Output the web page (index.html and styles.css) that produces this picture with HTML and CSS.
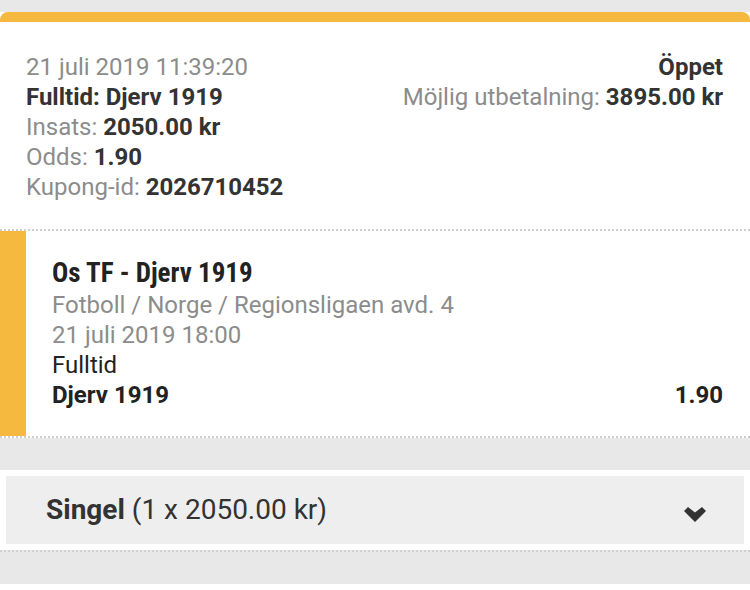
FILE: index.html
```html
<!DOCTYPE html>
<html lang="sv">
<head>
    <meta charset="UTF-8">
    <meta name="viewport" content="width=device-width, initial-scale=1.0">
    <title>Kupong</title>
    <link rel="stylesheet" href="styles.css">
</head>
<body>
    <div class="top-gap"></div>

    <div class="summary">
        <div class="summary-left">
            <div class="muted">21 juli 2019 11:39:20</div>
            <div class="strong">Fulltid: Djerv 1919</div>
            <div class="muted">Insats: <b class="strong">2050.00 kr</b></div>
            <div class="muted">Odds: <b class="strong">1.90</b></div>
            <div class="muted">Kupong-id: <b class="strong">2026710452</b></div>
        </div>
        <div class="summary-right">
            <div class="strong">Öppet</div>
            <div class="muted">Möjlig utbetalning: <b class="strong">3895.00 kr</b></div>
        </div>
    </div>

    <div class="selection">
        <div class="leg">
            <div class="leg-title">Os TF - Djerv 1919</div>
            <div class="muted">Fotboll / Norge / Regionsligaen avd. 4</div>
            <div class="muted">21 juli 2019 18:00</div>
            <div class="dark">Fulltid</div>
            <div class="leg-pick">
                <span>Djerv 1919</span>
                <span>1.90</span>
            </div>
        </div>
    </div>

    <div class="band"></div>

    <div class="stake-wrap">
        <div class="stake">
            <span><b>Singel</b> (1 x 2050.00 kr)</span>
            <svg class="chevron" width="22" height="15" viewBox="0 0 22 15">
                <path d="M0 4 L4 0 L11 5.5 L18 0 L22 4 L11 15 Z" fill="#333"/>
            </svg>
        </div>
    </div>

    <div class="band dotted"></div>
</body>
</html>
```

FILE: styles.css
```css
body { margin: 0; background: #fff; font-family: Roboto, "Liberation Sans", sans-serif; font-size: 24px; line-height: 30px; color: #333; }
b { font-weight: 700; }
.top-gap { height: 12px; background: #e8e8e8; }
.summary { display: flex; justify-content: space-between; background: #fff; border-top: 10px solid #f5b940; border-radius: 8px 8px 0 0; padding: 30px 27px 27px 26px; }
.summary-right { text-align: right; }
.muted { color: #8c8c8c; }
.strong { color: #333; font-weight: 700; }
.dark { color: #222; }
.selection { border-top: 2px dotted #cfcfcf; border-bottom: 2px dotted #cfcfcf; }
.leg { border-left: 26px solid #f5b940; padding: 25px 27px 26px 26px; }
.leg-title { font-size: 27px; line-height: 34px; font-weight: 700; font-stretch: condensed; color: #222; }
.leg-pick { display: flex; justify-content: space-between; font-weight: 700; color: #222; }
.band { height: 32px; background: #e8e8e8; }
.band.dotted { border-top: 2px dotted #cfcfcf; }
.stake-wrap { padding: 6px; }
.stake { display: flex; align-items: center; justify-content: space-between; height: 68px; background: #eeeeee; padding: 0 38px 0 40px; font-size: 28px; color: #333; }
.stake b { color: #333; }
.chevron { margin-top: 8px; }
```
